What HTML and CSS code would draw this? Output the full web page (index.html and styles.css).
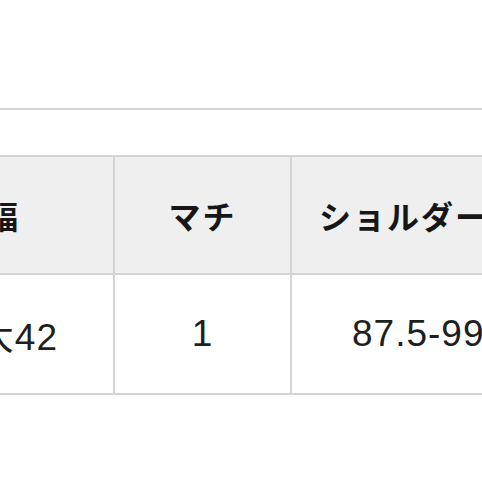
FILE: index.html
```html
<!DOCTYPE html>
<html lang="ja">
<head>
<meta charset="utf-8">
<link rel="stylesheet" href="styles.css">
</head>
<body>
<div class="rule"></div>
<div class="table">
  <div class="row head">
    <div class="cell c1 h1">横幅</div>
    <div class="cell c2">マチ</div>
    <div class="cell c3 h3">ショルダー</div>
  </div>
  <div class="row body">
    <div class="cell c1 b1">最大42</div>
    <div class="cell c2">1</div>
    <div class="cell c3 b3">87.5-99</div>
  </div>
</div>
</body>
</html>
```
FILE: styles.css
```css
html, body {
  margin: 0;
  padding: 0;
  background: #fff;
  overflow: hidden;
  width: 482px;
  height: 482px;
}
.rule {
  margin-top: 108px;
  height: 2px;
  background: #d4d4d4;
}
.table {
  margin-top: 45px;
  margin-left: -118px;
  width: 760px;
  border-top: 2px solid #d4d4d4;
}
.row {
  display: flex;
  border-bottom: 2px solid #d4d4d4;
}
.row.head {
  height: 116px;
  background: #efefef;
  font-family: "Noto Sans CJK JP", sans-serif;
  font-weight: 700;
  font-size: 32px;
  letter-spacing: 2px;
  color: #161616;
}
.row.body {
  height: 118px;
  background: #fff;
  font-family: "Liberation Sans", "Noto Sans CJK JP", sans-serif;
  font-size: 37px;
  letter-spacing: 1px;
  color: #1e1e1e;
}
.cell {
  display: flex;
  align-items: center;
  white-space: nowrap;
  box-sizing: border-box;
}
.c1 {
  width: 233px;
  border-right: 2px solid #d4d4d4;
  justify-content: flex-end;
}
.c2 {
  width: 177px;
  border-right: 2px solid #d4d4d4;
  justify-content: center;
}
.c3 {
  flex: 1;
  justify-content: flex-start;
}
.h1 { padding-right: 93px; }
.b1 { padding-right: 55px; }
.h3 { padding-left: 27px; }
.b3 { padding-left: 60px; }
```
